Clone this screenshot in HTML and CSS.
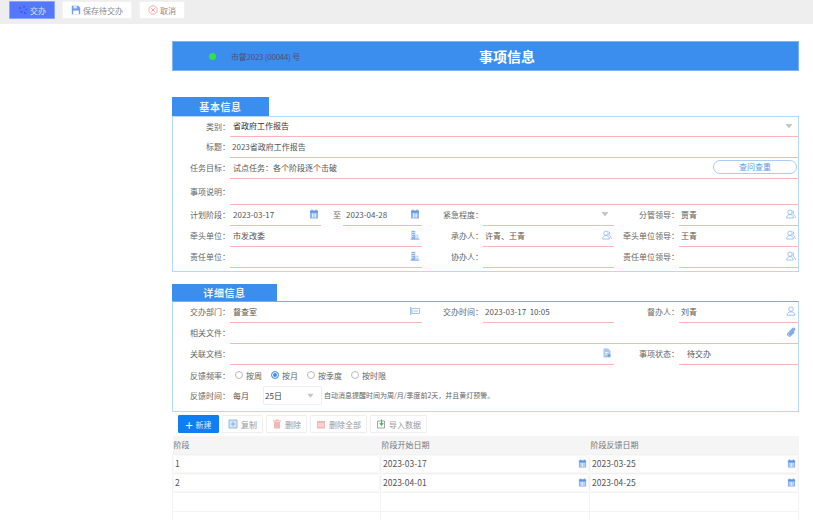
FILE: index.html
```html
<!DOCTYPE html>
<html lang="zh-CN">
<head>
  <meta charset="UTF-8" />
  <title>事项信息</title>
  <link rel="stylesheet" href="styles.css">
</head>
<body>

  <svg class="defs" width="0" height="0">
    <symbol id="i-cal" viewBox="0 0 10 10">
      <path d="M1 2h8v7.5H1z" fill="#8db4ee"/>
      <path d="M1 1.5h8V3.5H1z" fill="#5f95e6"/>
      <path d="M2.5.5h1v2h-1zM6.5.5h1v2h-1z" fill="#5f95e6"/>
      <path d="M3 4.5h.8v4H3zM4.7 4.5h.8v4h-.8zM6.3 4.5h.8v4h-.8z" fill="#fff"/>
    </symbol>
    <symbol id="i-org" viewBox="0 0 10 10">
      <path d="M1.500.8h3.700v8.4H1.500z" fill="#8db4ee"/>
      <path d="M5.200 4.600h3.300v4.600H5.200z" fill="#c6dbf7"/>
      <path d="M2.300 2h.9v1h-.9zM3.700 2h.9v1h-.9zM2.300 4h.9v1h-.9zM3.700 4h.9v1h-.9zM2.300 6h.9v1h-.9zM6.300 6h.9v1h-.9z" fill="#fff"/>
      <path d="M.5 9.200h9" stroke="#5f95e6" stroke-width=".7"/>
    </symbol>
    <symbol id="i-users" viewBox="0 0 10 10">
      <g fill="none" stroke="#8db4ee" stroke-width=".8">
        <circle cx="4" cy="3.200" r="2.200"/>
        <path d="M.6 9c.2-2.400 1.600-3.400 3.400-3.400S7.200 6.600 7.400 9z"/>
        <path d="M6.500 1.300c1.400.4 1.700 2.800.2 3.600 1.500.4 2.500 1.800 2.700 4"/>
      </g>
    </symbol>
    <symbol id="i-user" viewBox="0 0 10 10">
      <g fill="none" stroke="#8db4ee" stroke-width=".8">
        <circle cx="5" cy="3.200" r="2.300"/>
        <path d="M1 9.200c0-2.200 1.800-3.300 4-3.300s4 1.100 4 3.300z"/>
      </g>
    </symbol>
    <symbol id="i-dept" viewBox="0 0 10 10">
      <path d="M.8 1v8" stroke="#5f95e6" stroke-width=".8"/>
      <path d="M2 2.500h7.500v5H2z" fill="none" stroke="#8db4ee" stroke-width=".8"/>
      <path d="M3.500 4.600H8v.8H3.500z" fill="#8db4ee"/>
    </symbol>
    <symbol id="i-clip" viewBox="0 0 10 10">
      <path d="M7.800 2.200 3.300 6.800c-.5.600.2 1.300.8.800l4.300-4.400c1.100-1.200-.5-2.900-1.700-1.700L2.200 6.100c-1.700 1.900.8 4.200 2.500 2.500l3.500-3.600" fill="none" stroke="#7ea9e8" stroke-width="1.100"/>
    </symbol>
    <symbol id="i-doc" viewBox="0 0 10 10">
      <path d="M1.500.5h4.700l2.300 2.400v6.600h-7z" fill="#a9c8f3"/>
      <path d="M3 4h3.500v.8H3zM3 5.700h2.500v.8H3z" fill="#fff"/>
      <circle cx="7" cy="7.500" r="1.500" fill="#6fa0ea"/>
    </symbol>
    <symbol id="i-caret" viewBox="0 0 10 10">
      <path d="M1.500 3h7L5 7.500z" fill="#c4c6cb"/>
    </symbol>
  </svg>

  <div class="toolbar">
    <button class="btn btn-primary">
      <svg class="ico" viewBox="0 0 10 10"><g fill="#3c55d8"><circle cx="2" cy="3" r="1"/><circle cx="6" cy="1.800" r="1"/><circle cx="8.500" cy="4.500" r=".9"/><circle cx="3.200" cy="7" r="1"/><circle cx="7" cy="8" r="1"/></g></svg>
      交办
    </button>
    <button class="btn btn-save">
      <svg class="ico" viewBox="0 0 10 10"><path d="M.8.800h6.400l2 2v6.400H.8z" fill="#6fa0ea"/><path d="M2.500.800h3.400v2.600H2.500z" fill="#dbe8fa"/><path d="M2.200 5.600h5.600v3.600H2.200z" fill="#fff"/></svg>
      保存待交办
    </button>
    <button class="btn btn-cancel">
      <svg class="ico" viewBox="0 0 10 10"><circle cx="5" cy="5" r="4.200" fill="none" stroke="#f2a3a3" stroke-width=".9"/><path d="M3.300 3.300l3.400 3.400M6.700 3.300 3.300 6.700" stroke="#f08a8a" stroke-width=".9"/></svg>
      取消
    </button>
  </div>

  <main class="page">
    <div class="banner">
      <span class="dot"></span>
      <span class="doc-no">市督2023 (00044) 号</span>
      <h1>事项信息</h1>
    </div>

    <div class="tab tab-basic">基本信息</div>
    <section class="box box-basic">
      <div class="lbl">类别：</div>
      <div class="val span-all strong">省政府工作报告<svg class="ico-r caret"><use href="#i-caret"/></svg></div>

      <div class="lbl">标题：</div>
      <div class="val span-all tight">2023省政府工作报告</div>

      <div class="lbl">任务目标：</div>
      <div class="val span-all">试点任务：各个阶段逐个击破<span class="pill">查问查重</span></div>

      <div class="lbl">事项说明：</div>
      <div class="val span-all"></div>

      <div class="lbl">计划阶段：</div>
      <div class="val">2023-03-17<svg class="ico-r"><use href="#i-cal"/></svg></div>
      <div class="lbl lbl-mid">至</div>
      <div class="val">2023-04-28<svg class="ico-r"><use href="#i-cal"/></svg></div>
      <div class="lbl">紧急程度：</div>
      <div class="val"><svg class="ico-r caret"><use href="#i-caret"/></svg></div>
      <div class="lbl">分管领导：</div>
      <div class="val tight">贾青<svg class="ico-r"><use href="#i-users"/></svg></div>

      <div class="lbl">牵头单位：</div>
      <div class="val span-3">市发改委<svg class="ico-r"><use href="#i-org"/></svg></div>
      <div class="lbl">承办人：</div>
      <div class="val tight">许青、王青<svg class="ico-r"><use href="#i-users"/></svg></div>
      <div class="lbl">牵头单位领导：</div>
      <div class="val tight">王青<svg class="ico-r"><use href="#i-users"/></svg></div>

      <div class="lbl">责任单位：</div>
      <div class="val span-3"><svg class="ico-r"><use href="#i-org"/></svg></div>
      <div class="lbl">协办人：</div>
      <div class="val"></div>
      <div class="lbl">责任单位领导：</div>
      <div class="val"><svg class="ico-r"><use href="#i-users"/></svg></div>
    </section>

    <div class="tab tab-detail">详细信息</div>
    <section class="box box-detail">
      <div class="box-grid">
        <div class="lbl">交办部门：</div>
        <div class="val span-3">督查室<svg class="ico-r"><use href="#i-dept"/></svg></div>
        <div class="lbl">交办时间：</div>
        <div class="val tight">2023-03-17&nbsp; 10:05</div>
        <div class="lbl">督办人：</div>
        <div class="val tight">刘青<svg class="ico-r"><use href="#i-user"/></svg></div>

        <div class="lbl">相关文件：</div>
        <div class="val span-all"><svg class="ico-r"><use href="#i-clip"/></svg></div>

        <div class="lbl">关联文档：</div>
        <div class="val span-5"><svg class="ico-r"><use href="#i-doc"/></svg></div>
        <div class="lbl">事项状态：</div>
        <div class="val status">待交办</div>
      </div>

      <div class="freq-row">
        <div class="lbl">反馈频率：</div>
        <label class="radio"><i></i>按周</label>
        <label class="radio on"><i></i>按月</label>
        <label class="radio"><i></i>按季度</label>
        <label class="radio"><i></i>按时限</label>
      </div>

      <div class="time-row">
        <div class="lbl">反馈时间：</div>
        <span class="month">每月</span>
        <div class="day-select">25日<svg class="caret-sm"><use href="#i-caret"/></svg></div>
        <span class="hint">自动消息提醒时间为周/月/季度前2天，并且黄灯预警。</span>
      </div>
    </section>

    <div class="actions">
      <button class="act act-new"><span class="plus">+</span>新建</button>
      <button class="act">
        <svg class="ico-a" viewBox="0 0 10 10"><path d="M1 1h8v8H1z" fill="#dbe8fa" stroke="#7aa7e8" stroke-width=".8"/><path d="M5 2.500v5M2.500 5h5" stroke="#7aa7e8" stroke-width=".8"/></svg>
        复制
      </button>
      <button class="act">
        <svg class="ico-a" viewBox="0 0 10 10"><path d="M2 3h6v6.500H2z" fill="#f6b5b5"/><path d="M1 2h8M3.500 1h3" stroke="#f29c9c" stroke-width=".9"/></svg>
        删除
      </button>
      <button class="act">
        <svg class="ico-a" viewBox="0 0 10 10"><path d="M1 2h8v7.500H1z" fill="#f6b5b5"/><path d="M1 1.500h8M3 4v4M5 4v4M7 4v4" stroke="#fff" stroke-width=".7"/></svg>
        删除全部
      </button>
      <button class="act">
        <svg class="ico-a" viewBox="0 0 10 10"><path d="M1.500 2h7v7h-7z" fill="#fff" stroke="#8a8f99" stroke-width=".8"/><path d="M5.500.5v5M3.700 4l1.800 2.200L7.300 4" fill="none" stroke="#3fb34f" stroke-width="1.100"/></svg>
        导入数据
      </button>
    </div>

    <table class="stages">
      <colgroup>
        <col class="col-a"><col class="col-b"><col class="col-c">
      </colgroup>
      <thead>
        <tr><th>阶段</th><th>阶段开始日期</th><th>阶段反馈日期</th></tr>
      </thead>
      <tbody>
        <tr>
          <td><div class="cell">1</div></td>
          <td><div class="cell">2023-03-17<svg class="ico-c"><use href="#i-cal"/></svg></div></td>
          <td><div class="cell">2023-03-25<svg class="ico-c"><use href="#i-cal"/></svg></div></td>
        </tr>
        <tr>
          <td><div class="cell">2</div></td>
          <td><div class="cell">2023-04-01<svg class="ico-c"><use href="#i-cal"/></svg></div></td>
          <td><div class="cell">2023-04-25<svg class="ico-c"><use href="#i-cal"/></svg></div></td>
        </tr>
        <tr><td></td><td></td><td></td></tr>
        <tr><td></td><td></td><td></td></tr>
      </tbody>
    </table>
  </main>

</body>
</html>
```

FILE: styles.css
```css
* {
  margin: 0;
  padding: 0;
  box-sizing: border-box;
}

html, body {
  height: 520px;
  overflow: hidden;
}

body {
  background: #fff;
  color: #555;
  font-family: "Noto Sans CJK SC", "Noto Sans", sans-serif;
  font-size: 8px;
}

.defs {
  position: absolute;
}

/* top toolbar */
.toolbar {
  display: flex;
  gap: 7px;
  height: 24px;
  padding: 1px 0 0 9px;
  background: #eee;
}

.btn {
  display: flex;
  align-items: center;
  justify-content: center;
  gap: 2px;
  height: 18px;
  border: 1px solid #f2f2f2;
  border-radius: 1px;
  background: #fff;
  color: #8a8a8a;
  font: inherit;
}

.btn-primary {
  width: 46px;
  background: #5577fb;
  border-color: #88a4fc;
  color: #dfe6ff;
}

.btn-save {
  width: 70px;
}

.btn-cancel {
  width: 46px;
}

.ico {
  width: 10px;
  height: 10px;
}

/* page column */
.page {
  width: 627px;
  margin: 17px 0 0 172px;
}

.banner {
  position: relative;
  display: flex;
  align-items: center;
  height: 30px;
  background: #3b8eed;
  border: 1px solid #7db4f3;
}

.dot {
  width: 7px;
  height: 7px;
  margin-left: 36px;
  border-radius: 50%;
  background: #2fe24a;
}

.doc-no {
  margin-left: 15px;
  color: #5b4a70;
  letter-spacing: -.25px;
}

.banner h1 {
  position: absolute;
  left: 306px;
  color: #fff;
  font-size: 14px;
  font-weight: 700;
}

.tab {
  display: flex;
  align-items: center;
  justify-content: center;
  background: #3b8eed;
  color: #eaf3ff;
  font-size: 10px;
  font-weight: 700;
  letter-spacing: .6px;
}

.tab-basic {
  width: 97px;
  height: 19px;
  margin-top: 26px;
}

.tab-detail {
  width: 105px;
  height: 17px;
  margin-top: 12px;
}

.box {
  border: 1px solid #b5d9fd;
}

.box-basic,
.box-grid {
  display: grid;
  grid-template-columns: 57px 91px 22px 79px 61px 131px 65px 119px;
}

.box-basic {
  height: 156px;
  grid-template-rows: 20px 21px 21px 26px 21px 21px 21px;
}

.box-detail {
  height: 111px;
  border-top-color: #6fb0f5;
}

.box-grid {
  grid-template-rows: 21px 21px 21px;
}

.lbl {
  display: flex;
  align-items: center;
  justify-content: flex-end;
  padding-bottom: 2px;
  color: #666;
  white-space: nowrap;
}

.lbl-mid {
  padding-right: 2px;
}

.freq-row .lbl,
.time-row .lbl {
  width: 57px;
  padding-bottom: 0;
}

.val {
  position: relative;
  display: flex;
  align-items: center;
  padding: 0 0 2px 3px;
  border-bottom: 1px solid #ffb3b3;
  color: #555;
}

.tight {
  padding-left: 2px;
}

.status {
  padding-left: 8px;
}

.strong {
  color: #333;
}

.span-all {
  grid-column: 2 / 9;
}

.span-3 {
  grid-column: 2 / 5;
}

.span-5 {
  grid-column: 2 / 7;
}

.ico-r {
  position: absolute;
  right: 2px;
  top: 50%;
  width: 10px;
  height: 10px;
  margin-top: -6px;
}

.caret {
  right: 4px;
}

.pill {
  position: absolute;
  right: 1px;
  top: 2px;
  width: 84px;
  height: 14px;
  border: 1px solid #a9cdf7;
  border-radius: 7px;
  background: #fff;
  color: #5f9bea;
  text-align: center;
  line-height: 12px;
}

/* radio row */
.freq-row {
  display: flex;
  align-items: center;
  height: 20px;
}

.freq-row .lbl + .radio {
  margin-left: 5px;
}

.radio {
  display: flex;
  align-items: center;
  gap: 3px;
  margin-left: 4px;
  margin-right: 5px;
  color: #666;
}

.radio i {
  width: 8px;
  height: 8px;
  border: 1px solid #bbb;
  border-radius: 50%;
  background: #fff;
}

.radio.on i {
  border-color: #5f9bea;
  box-shadow: inset 0 0 0 1px #fff;
  background: #3b8eed;
}

.time-row {
  display: flex;
  align-items: center;
  height: 20px;
}

.month {
  margin-left: 3px;
  width: 30px;
}

.day-select {
  display: flex;
  align-items: center;
  justify-content: space-between;
  width: 59px;
  height: 19px;
  padding: 0 3px 0 1px;
  border: 1px solid #eee;
  border-radius: 2px;
  color: #444;
}

.caret-sm {
  width: 9px;
  height: 9px;
  margin-right: 3px;
}

.hint {
  margin-left: 2px;
  font-size: 7px;
  color: #666;
}

/* action buttons */
.actions {
  display: flex;
  gap: 3px;
  margin-top: 3px;
  padding-left: 6px;
}

.act {
  display: flex;
  align-items: center;
  justify-content: center;
  gap: 3px;
  width: 41px;
  height: 18px;
  border: 1px solid #eee;
  border-radius: 1px;
  background: #fff;
  color: #999;
  font: inherit;
}

.act:nth-child(4),
.act:nth-child(5) {
  width: 57px;
}

.act-new {
  background: #0d7ff2;
  border-color: #0d7ff2;
  color: #dcecff;
}

.plus {
  color: #fff;
  font-size: 13px;
  line-height: 1;
}

.ico-a {
  width: 10px;
  height: 10px;
}

/* stage table */
.stages {
  width: 627px;
  margin-top: 3px;
  border-collapse: collapse;
  table-layout: fixed;
  font-size: 8.5px;
  color: #555;
}

.col-a {
  width: 208px;
}

.col-b,
.col-c {
  width: 209px;
}

.stages th {
  height: 18px;
  padding-left: 1px;
  background: #f5f5f5;
  color: #777;
  font-size: 8px;
  font-weight: 400;
  text-align: left;
}

.stages td {
  height: 19px;
  border: 1px solid #f3f3f3;
  padding: 1px 1px 0;
  vertical-align: top;
}

.cell {
  position: relative;
  height: 16px;
  padding-left: 1px;
  line-height: 15px;
  border-radius: 2px;
  background: #fff;
  box-shadow: 0 0 2px #e3e3e3;
}

.ico-c {
  position: absolute;
  right: 1px;
  top: 3px;
  width: 9px;
  height: 9px;
}
```
